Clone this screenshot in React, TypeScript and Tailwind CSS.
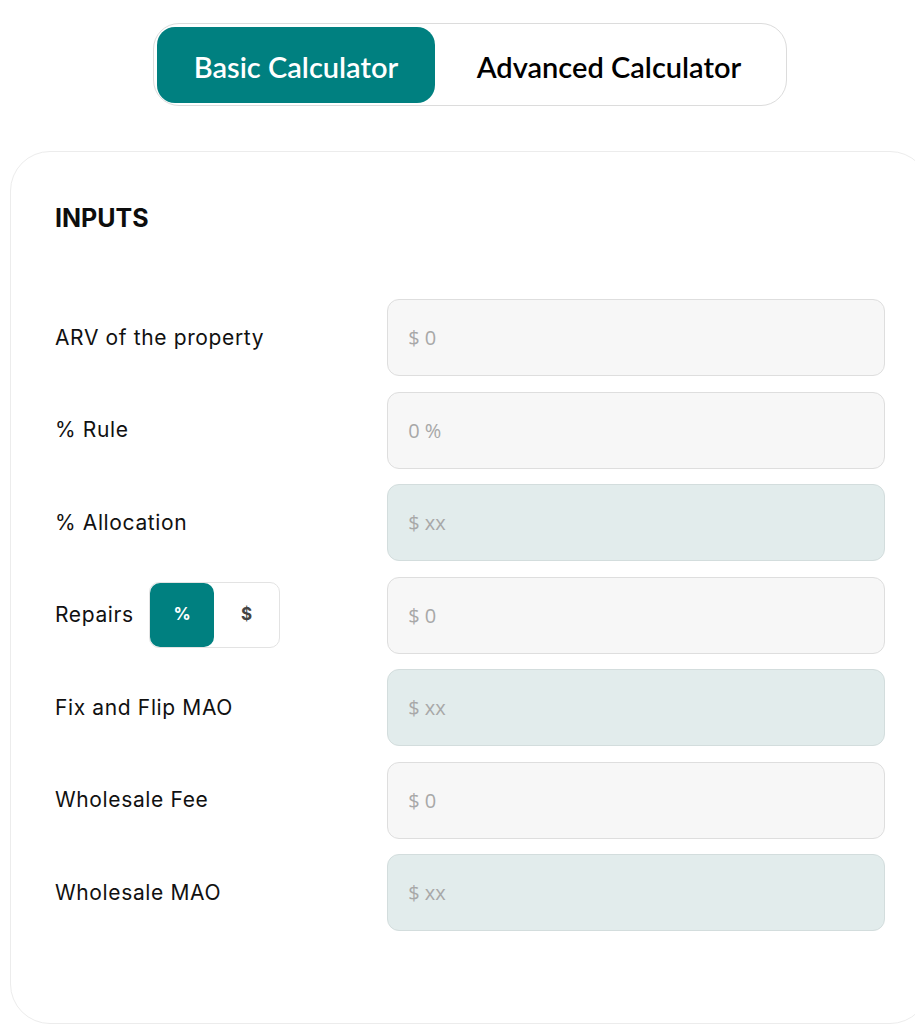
import { useState } from "react";

const rows = [
  { label: "ARV of the property", placeholder: "$ 0", computed: false },
  { label: "% Rule", placeholder: "0 %", computed: false },
  { label: "% Allocation", placeholder: "$ xx", computed: true },
  { label: "Repairs", placeholder: "$ 0", computed: false, toggle: true },
  { label: "Fix and Flip MAO", placeholder: "$ xx", computed: true },
  { label: "Wholesale Fee", placeholder: "$ 0", computed: false },
  { label: "Wholesale MAO", placeholder: "$ xx", computed: true },
];

export default function App() {
  const [tab, setTab] = useState<"basic" | "advanced">("basic");
  const [unit, setUnit] = useState<"%" | "$">("%");

  return (
    <div className="min-h-screen w-[915px] overflow-hidden bg-white" style={{ fontFamily: "Inter, sans-serif" }}>
      <div className="ml-[10px] w-[920px] pt-[23px]">
        <div className="flex justify-center">
          <div className="flex h-[83px] w-[634px] items-center rounded-[26px] border border-[#dcdcdc] p-[3px]">
            <button
              onClick={() => setTab("basic")}
              className={`h-[76px] w-[278px] rounded-[18px] pt-[4px] text-[29px] font-semibold ${tab === "basic" ? "bg-[#008080] text-white" : "text-black"}`}
              style={{ fontFamily: "Lato, sans-serif" }}
            >
              Basic Calculator
            </button>
            <button
              onClick={() => setTab("advanced")}
              className={`h-[76px] flex-1 rounded-[18px] pt-[4px] text-[29px] font-semibold ${tab === "advanced" ? "bg-[#008080] text-white" : "text-black"}`}
              style={{ fontFamily: "Lato, sans-serif" }}
            >
              Advanced Calculator
            </button>
          </div>
        </div>

        <div className="mt-[45px] rounded-[40px] border border-[#ececec] px-[44px] pb-[92px] pt-[50px]">
          <h2 className="text-[25px] font-bold leading-8 text-[#0d0d0d]">INPUTS</h2>

          <div className="mt-[65px] flex flex-col gap-[15.5px]">
            {rows.map((r) => (
              <div key={r.label} className="flex items-center">
                <div className="flex w-[333px] items-center gap-[15px]">
                  <span className="text-[21px] tracking-[0.03em] text-[#111]">{r.label}</span>
                  {r.toggle && (
                    <div className="flex h-[66px] w-[131px] rounded-[10px] border border-[#e3e3e3]">
                      {(["%", "$"] as const).map((u) => (
                        <button
                          key={u}
                          onClick={() => setUnit(u)}
                          className={`h-full w-[65px] rounded-[10px] text-[17px] font-bold ${unit === u ? "bg-[#008080] text-white" : "text-[#444]"}`}
                        >
                          {u}
                        </button>
                      ))}
                    </div>
                  )}
                </div>
                <input
                  readOnly={r.computed}
                  placeholder={r.placeholder}
                  className={`h-[77px] w-[499px] rounded-[12px] border px-[20px] text-[20px] outline-none placeholder:text-[#a8a8a8] ${r.computed ? "border-[#d3dddd] bg-[#e2ecec]" : "border-[#dedede] bg-[#f7f7f7]"}`}
                  style={{ fontFamily: "'Open Sans', sans-serif" }}
                />
              </div>
            ))}
          </div>
        </div>
      </div>
    </div>
  );
}
